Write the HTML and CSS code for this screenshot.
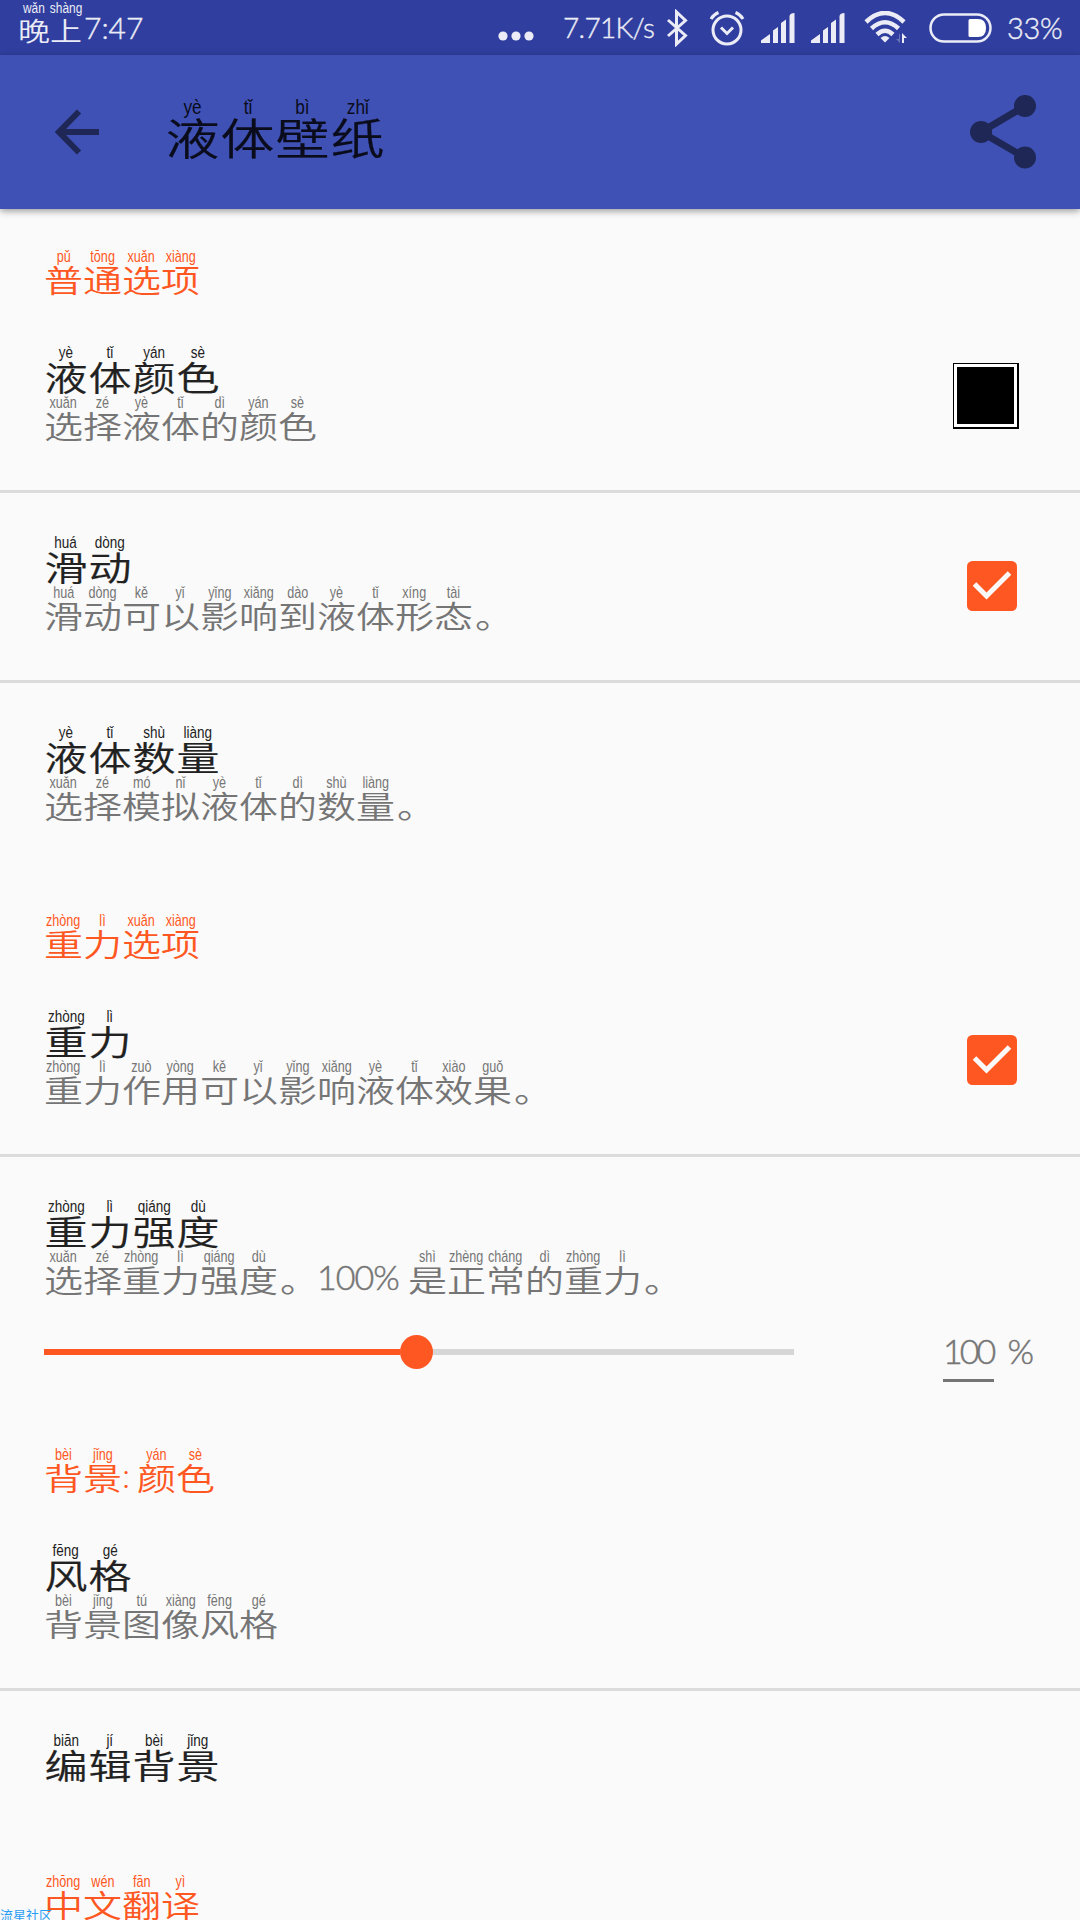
FILE: index.html
```html
<!DOCTYPE html>
<html lang="zh-CN">
<head>
    <meta charset="UTF-8">
    <meta name="viewport" content="width=device-width, initial-scale=1.0">
    <title>液体壁纸</title>
    <link rel="stylesheet" href="styles.css">
</head>
<body>
    <div class="status-bar">
        <div class="line clock">
            <ruby><rb>晚</rb><rt>wǎn</rt></ruby><ruby><rb>上</rb><rt>shàng</rt></ruby><span class="time">7:47</span>
        </div>
        <div class="status-icons">
            <svg class="dots" width="36" height="10" viewBox="0 0 36 10"><circle cx="5" cy="5" r="4.6"/><circle cx="18" cy="5" r="4.6"/><circle cx="31" cy="5" r="4.6"/></svg>
            <span class="speed">7.71K/s</span>
            <svg class="bluetooth" width="22" height="38" viewBox="0 0 22 38"><path class="stroke" d="M2 11 L19.500 26.500 L10.500 35 V3 L19.500 11.500 L2 27"/></svg>
            <svg class="alarm" width="36" height="36" viewBox="0 0 36 36"><circle class="stroke" cx="18" cy="20" r="14"/><path class="stroke" d="M12 17.500 L18 23.500 L24 17.500"/><path class="stroke" d="M2 9 Q4.500 4.500 9.500 2.500 M34 9 Q31.500 4.500 26.500 2.500"/></svg>
            <svg class="signal" width="34" height="30" viewBox="0 0 34 30"><path d="M0 30 V27.500 L9 21 V30 Z M12 30 V17.500 L17 14 V30 Z M20 30 V10 L25 6.500 V30 Z M28.500 30 V3 Q29 0 33.500 0 V30 Z"/></svg>
            <svg class="signal second" width="34" height="30" viewBox="0 0 34 30"><path d="M0 30 V27.500 L9 21 V30 Z M12 30 V17.500 L17 14 V30 Z M20 30 V10 L25 6.500 V30 Z M28.500 30 V3 Q29 0 33.500 0 V30 Z"/></svg>
            <svg class="wifi" width="46" height="34" viewBox="0 0 46 34"><path class="arc" d="M2 11 Q21 -7 40 11 M7.500 17.500 Q21 5 34.500 17.500 M13 23.500 Q21 16 29 23.500"/><path d="M21 31.500 L16.500 27 Q21 23 25.500 27 Z"/><path class="faint" d="M36 23 V32 L32 28 H35 V23 Z"/><path d="M38 32 V22 L43 27 H40 V32 Z"/></svg>
            <svg class="battery" width="64" height="30" viewBox="0 0 64 30"><rect class="case" x="1.500" y="1.500" width="60" height="27" rx="13.500"/><path class="charge" d="M41 6 H49 Q57 6 57 15 Q57 24 49 24 H41 Q39.500 24 39.500 22.500 V7.500 Q39.500 6 41 6 Z"/></svg>
            <span class="percent">33%</span>
        </div>
    </div>

    <div class="app-bar">
        <svg class="back" width="46" height="46" viewBox="0 0 46 46"><path d="M24 2.500 L4 23 L24 43.500 M4 23 H44"/></svg>
        <h1 class="line">
            <ruby><rb>液</rb><rt>yè</rt></ruby><ruby><rb>体</rb><rt>tǐ</rt></ruby><ruby><rb>壁</rb><rt>bì</rt></ruby><ruby><rb>纸</rb><rt>zhǐ</rt></ruby>
        </h1>
        <svg class="share" width="68" height="76" viewBox="0 0 68 76"><path d="M56 12 L12 38 L56 63.500"/><circle cx="56" cy="12" r="11"/><circle cx="12" cy="38" r="11"/><circle cx="56" cy="63.500" r="11"/></svg>
    </div>

    <div class="settings">
        <h2 class="line"><ruby><rb>普</rb><rt>pǔ</rt></ruby><ruby><rb>通</rb><rt>tōng</rt></ruby><ruby><rb>选</rb><rt>xuǎn</rt></ruby><ruby><rb>项</rb><rt>xiàng</rt></ruby></h2>

        <div class="row divided">
            <div class="text">
                <div class="line title"><ruby><rb>液</rb><rt>yè</rt></ruby><ruby><rb>体</rb><rt>tǐ</rt></ruby><ruby><rb>颜</rb><rt>yán</rt></ruby><ruby><rb>色</rb><rt>sè</rt></ruby></div>
                <div class="line summary"><ruby><rb>选</rb><rt>xuǎn</rt></ruby><ruby><rb>择</rb><rt>zé</rt></ruby><ruby><rb>液</rb><rt>yè</rt></ruby><ruby><rb>体</rb><rt>tǐ</rt></ruby><ruby><rb>的</rb><rt>dì</rt></ruby><ruby><rb>颜</rb><rt>yán</rt></ruby><ruby><rb>色</rb><rt>sè</rt></ruby></div>
            </div>
            <div class="swatch"><div class="swatch-color"></div></div>
        </div>

        <div class="row divided">
            <div class="text">
                <div class="line title"><ruby><rb>滑</rb><rt>huá</rt></ruby><ruby><rb>动</rb><rt>dòng</rt></ruby></div>
                <div class="line summary"><ruby><rb>滑</rb><rt>huá</rt></ruby><ruby><rb>动</rb><rt>dòng</rt></ruby><ruby><rb>可</rb><rt>kě</rt></ruby><ruby><rb>以</rb><rt>yǐ</rt></ruby><ruby><rb>影</rb><rt>yǐng</rt></ruby><ruby><rb>响</rb><rt>xiǎng</rt></ruby><ruby><rb>到</rb><rt>dào</rt></ruby><ruby><rb>液</rb><rt>yè</rt></ruby><ruby><rb>体</rb><rt>tǐ</rt></ruby><ruby><rb>形</rb><rt>xíng</rt></ruby><ruby><rb>态</rb><rt>tài</rt></ruby><ruby class="stop"><rb>。</rb></ruby></div>
            </div>
            <svg class="checkbox" width="50" height="50" viewBox="0 0 50 50"><rect width="50" height="50" rx="5.500"/><path d="M7.500 23 L19.500 35 L42.500 12"/></svg>
        </div>

        <div class="row">
            <div class="text">
                <div class="line title"><ruby><rb>液</rb><rt>yè</rt></ruby><ruby><rb>体</rb><rt>tǐ</rt></ruby><ruby><rb>数</rb><rt>shù</rt></ruby><ruby><rb>量</rb><rt>liàng</rt></ruby></div>
                <div class="line summary"><ruby><rb>选</rb><rt>xuǎn</rt></ruby><ruby><rb>择</rb><rt>zé</rt></ruby><ruby><rb>模</rb><rt>mó</rt></ruby><ruby><rb>拟</rb><rt>nǐ</rt></ruby><ruby><rb>液</rb><rt>yè</rt></ruby><ruby><rb>体</rb><rt>tǐ</rt></ruby><ruby><rb>的</rb><rt>dì</rt></ruby><ruby><rb>数</rb><rt>shù</rt></ruby><ruby><rb>量</rb><rt>liàng</rt></ruby><ruby class="stop"><rb>。</rb></ruby></div>
            </div>
        </div>

        <h2 class="line"><ruby><rb>重</rb><rt>zhòng</rt></ruby><ruby><rb>力</rb><rt>lì</rt></ruby><ruby><rb>选</rb><rt>xuǎn</rt></ruby><ruby><rb>项</rb><rt>xiàng</rt></ruby></h2>

        <div class="row divided">
            <div class="text">
                <div class="line title"><ruby><rb>重</rb><rt>zhòng</rt></ruby><ruby><rb>力</rb><rt>lì</rt></ruby></div>
                <div class="line summary"><ruby><rb>重</rb><rt>zhòng</rt></ruby><ruby><rb>力</rb><rt>lì</rt></ruby><ruby><rb>作</rb><rt>zuò</rt></ruby><ruby><rb>用</rb><rt>yòng</rt></ruby><ruby><rb>可</rb><rt>kě</rt></ruby><ruby><rb>以</rb><rt>yǐ</rt></ruby><ruby><rb>影</rb><rt>yǐng</rt></ruby><ruby><rb>响</rb><rt>xiǎng</rt></ruby><ruby><rb>液</rb><rt>yè</rt></ruby><ruby><rb>体</rb><rt>tǐ</rt></ruby><ruby><rb>效</rb><rt>xiào</rt></ruby><ruby><rb>果</rb><rt>guǒ</rt></ruby><ruby class="stop"><rb>。</rb></ruby></div>
            </div>
            <svg class="checkbox" width="50" height="50" viewBox="0 0 50 50"><rect width="50" height="50" rx="5.500"/><path d="M7.500 23 L19.500 35 L42.500 12"/></svg>
        </div>

        <div class="row slider-row">
            <div class="text">
                <div class="line title"><ruby><rb>重</rb><rt>zhòng</rt></ruby><ruby><rb>力</rb><rt>lì</rt></ruby><ruby><rb>强</rb><rt>qiáng</rt></ruby><ruby><rb>度</rb><rt>dù</rt></ruby></div>
                <div class="line summary"><ruby><rb>选</rb><rt>xuǎn</rt></ruby><ruby><rb>择</rb><rt>zé</rt></ruby><ruby><rb>重</rb><rt>zhòng</rt></ruby><ruby><rb>力</rb><rt>lì</rt></ruby><ruby><rb>强</rb><rt>qiáng</rt></ruby><ruby><rb>度</rb><rt>dù</rt></ruby><ruby class="stop"><rb>。</rb></ruby><span class="latin">100%</span><ruby><rb>是</rb><rt>shì</rt></ruby><ruby><rb>正</rb><rt>zhèng</rt></ruby><ruby><rb>常</rb><rt>cháng</rt></ruby><ruby><rb>的</rb><rt>dì</rt></ruby><ruby><rb>重</rb><rt>zhòng</rt></ruby><ruby><rb>力</rb><rt>lì</rt></ruby><ruby class="stop"><rb>。</rb></ruby></div>
            </div>
            <div class="slider">
                <div class="track"><div class="fill"></div><div class="knob"></div></div>
                <div class="value"><span class="number">100</span><span class="unit">%</span></div>
            </div>
        </div>

        <h2 class="line"><ruby><rb>背</rb><rt>bèi</rt></ruby><ruby><rb>景</rb><rt>jǐng</rt></ruby><span class="colon">:</span><ruby><rb>颜</rb><rt>yán</rt></ruby><ruby><rb>色</rb><rt>sè</rt></ruby></h2>

        <div class="row divided">
            <div class="text">
                <div class="line title"><ruby><rb>风</rb><rt>fēng</rt></ruby><ruby><rb>格</rb><rt>gé</rt></ruby></div>
                <div class="line summary"><ruby><rb>背</rb><rt>bèi</rt></ruby><ruby><rb>景</rb><rt>jǐng</rt></ruby><ruby><rb>图</rb><rt>tú</rt></ruby><ruby><rb>像</rb><rt>xiàng</rt></ruby><ruby><rb>风</rb><rt>fēng</rt></ruby><ruby><rb>格</rb><rt>gé</rt></ruby></div>
            </div>
        </div>

        <div class="row short">
            <div class="text">
                <div class="line title"><ruby><rb>编</rb><rt>biān</rt></ruby><ruby><rb>辑</rb><rt>jí</rt></ruby><ruby><rb>背</rb><rt>bèi</rt></ruby><ruby><rb>景</rb><rt>jǐng</rt></ruby></div>
            </div>
        </div>

        <h2 class="line"><ruby><rb>中</rb><rt>zhōng</rt></ruby><ruby><rb>文</rb><rt>wén</rt></ruby><ruby><rb>翻</rb><rt>fān</rt></ruby><ruby><rb>译</rb><rt>yì</rt></ruby></h2>
    </div>

    <div class="watermark">流星社区</div>
</body>
</html>
```

FILE: styles.css
```css
* {
    box-sizing: border-box;
}

body {
    position: relative;
    width: 1080px;
    height: 1920px;
    margin: 0;
    overflow: hidden;
    background: #fafafa;
    font-family: Lato, "Noto Sans CJK SC", sans-serif;
    font-weight: 300;
}

svg {
    display: block;
    flex: none;
}

/* characters with pinyin above them */
.line {
    display: flex;
    align-items: flex-end;
    margin: 0;
    font-weight: 350;
    white-space: nowrap;
}

ruby {
    display: flex;
    flex-direction: column-reverse;
    align-items: center;
    width: 1em;
    flex: none;
}

rb {
    display: block;
    height: 31px;
    line-height: 27px;
    font-family: "Noto Sans CJK SC", sans-serif;
    transform: scaleY(0.8);
}

rt {
    display: block;
    height: 17px;
    line-height: 17px;
    font-family: "Liberation Sans", sans-serif;
    font-size: 14px;
    font-weight: 400;
    white-space: nowrap;
    transform: scale(0.9, 1.14);
}

/* status bar */
.status-bar {
    display: flex;
    justify-content: space-between;
    height: 55px;
    padding: 0 17px 0 18px;
    background: #303f9f;
    color: #ebecf6;
}

.clock {
    height: 45px;
    font-size: 32px;
}

.clock rb {
    height: 28px;
    line-height: 24px;
}

.clock rt {
    transform: scale(0.85, 1.1);
}

.time {
    margin-left: 2px;
    font-size: 30px;
    line-height: 36px;
    height: 36px;
    font-weight: 300;
    -webkit-text-stroke: 0.4px;
}

.status-icons {
    display: flex;
    align-items: center;
    fill: #ebecf6;
    font-size: 29px;
}

.status-icons .stroke {
    fill: none;
    stroke: #ebecf6;
    stroke-width: 3;
}

.dots {
    margin: 16px 29px 0 0;
}

.speed,
.percent {
    line-height: 55px;
    -webkit-text-stroke: 0.4px;
}

.speed {
    width: 91px;
    font-size: 28px;
    letter-spacing: -0.7px;
}

.bluetooth {
    margin-left: 12px;
}

.alarm {
    margin-left: 21px;
}

.signal {
    margin-left: 16px;
}

.signal.second {
    margin-left: 16px;
}

.wifi {
    margin-left: 19px;
}

.wifi .arc {
    fill: none;
    stroke: #ebecf6;
    stroke-width: 4.5;
}

.wifi .faint {
    fill: #6873b9;
}

.battery {
    margin-left: 19px;
}

.battery .case {
    fill: none;
    stroke: #ebecf6;
    stroke-width: 2.5;
}

.battery .charge {
    fill: #fff;
}

.percent {
    width: 56px;
    margin-left: 14px;
    letter-spacing: -0.3px;
}

/* app bar */
.app-bar {
    display: flex;
    align-items: center;
    height: 154px;
    padding: 0 43px 0 55px;
    background: #3f51b5;
    box-shadow: 0 2px 7px rgba(0, 0, 0, 0.4);
}

.back path {
    fill: none;
    stroke: #1e2755;
    stroke-width: 6;
}

.app-bar h1 {
    margin: 0 auto 7px 64px;
    color: #0a0c1b;
    font-size: 55px;
}

.app-bar rb {
    height: 43px;
    line-height: 36px;
    font-size: 54px;
}

.app-bar rt {
    height: 22px;
    line-height: 22px;
    font-size: 20px;
    transform: scale(0.86, 1);
}

.share {
    fill: #1e2755;
}

.share path {
    fill: none;
    stroke: #1e2755;
    stroke-width: 7;
}

/* settings list */
.settings h2 {
    height: 94px;
    padding: 0 44px 7px;
    color: #ff5722;
    font-size: 39px;
}

.colon {
    width: 15px;
    line-height: 38px;
    font-size: 34px;
}

.row {
    display: flex;
    justify-content: space-between;
    height: 190px;
    padding: 40px 61px 0 44px;
}

.divided {
    border-bottom: 3px solid #dbdbdb;
}

.short {
    height: 143px;
}

.title {
    color: #212121;
    font-size: 44px;
}

.title rb {
    height: 34px;
    line-height: 30px;
    font-size: 43px;
}

.title rt {
    font-size: 15px;
}

.app-bar rb,
.title rb {
    -webkit-text-stroke: 0.3px;
}

.summary {
    color: #757575;
    font-size: 39px;
}

/* accents are cut at the ascender height */
.title rt,
.summary rt {
    clip-path: inset(3px -5px -5px -5px);
}

.stop rb {
    margin-left: 4px;
}

.latin {
    width: 91px;
    height: 40px;
    line-height: 42px;
    font-size: 34px;
    font-weight: 300;
    letter-spacing: -1px;
    -webkit-text-stroke: 0.5px;
}

.swatch {
    width: 66px;
    height: 66px;
    margin-top: 20px;
    padding: 3px;
    border: 1px solid #000;
    border-right-width: 2px;
    border-bottom-width: 2px;
    background: #fff;
}

.swatch-color {
    width: 57px;
    height: 57px;
    background: #000;
}

.checkbox {
    margin: 28px 2px 0 0;
    fill: #ff5722;
}

.checkbox path {
    fill: none;
    stroke: #fafafa;
    stroke-width: 5;
}

.slider-row {
    flex-direction: column;
    justify-content: flex-start;
    height: 250px;
    padding-right: 44px;
}

.slider {
    display: flex;
    align-items: center;
    justify-content: space-between;
    height: 56px;
    margin-top: 28px;
}

.track {
    display: flex;
    align-items: center;
    width: 750px;
    height: 6px;
    background: #d6d6d6;
}

.fill {
    width: 356px;
    height: 6px;
    background: #ff5722;
}

.knob {
    width: 33px;
    height: 34px;
    border-radius: 50%;
    background: #ff5722;
}

.value {
    display: flex;
    width: 93px;
    justify-content: space-between;
    color: #757575;
    font-size: 34px;
    line-height: 55px;
    -webkit-text-stroke: 0.5px;
}

.number {
    width: 51px;
    height: 59px;
    border-bottom: 3px solid #757575;
    letter-spacing: -3px;
}

.unit {
    margin-right: 2px;
}

.watermark {
    position: absolute;
    left: 0;
    bottom: -3px;
    color: #2a9df4;
    font-size: 13px;
    font-weight: 400;
    line-height: 16px;
}
```
